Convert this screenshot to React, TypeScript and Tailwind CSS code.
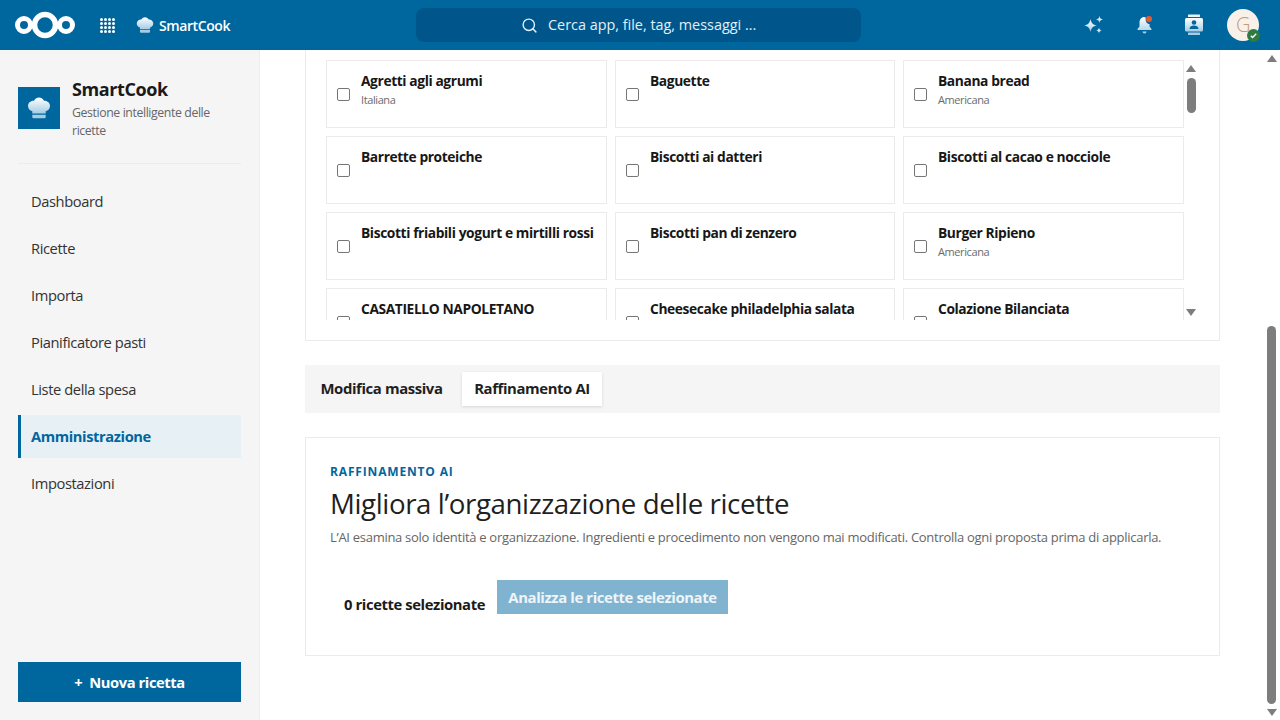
import { Search } from "lucide-react"

const recipes = [
  { name: "Agretti agli agrumi", kind: "Italiana" },
  { name: "Baguette" },
  { name: "Banana bread", kind: "Americana" },
  { name: "Barrette proteiche" },
  { name: "Biscotti ai datteri" },
  { name: "Biscotti al cacao e nocciole" },
  { name: "Biscotti friabili yogurt e mirtilli rossi" },
  { name: "Biscotti pan di zenzero" },
  { name: "Burger Ripieno", kind: "Americana" },
  { name: "CASATIELLO NAPOLETANO" },
  { name: "Cheesecake philadelphia salata" },
  { name: "Colazione Bilanciata" },
]

const navItems = [
  "Dashboard",
  "Ricette",
  "Importa",
  "Pianificatore pasti",
  "Liste della spesa",
  "Amministrazione",
  "Impostazioni",
]

function IconGradient({ id }: { id: string }) {
  return (
    <defs>
      <linearGradient id={id} x1="0" y1="0" x2="0" y2="1">
        <stop offset="0" stopColor="#ffffff" />
        <stop offset="1" stopColor="#a4cce4" />
      </linearGradient>
    </defs>
  )
}

function ChefHatIcon({ id, className }: { id: string; className?: string }) {
  return (
    <svg viewBox="0 0 24 24" className={className}>
      <IconGradient id={id} />
      <path
        fill={`url(#${id})`}
        d="M12 1.500c-2.300 0-4.200 1.300-5 3.200C3.600 4.500 1 6.900 1 10c0 2.600 1.800 4.700 4.300 5.300V17.500h13.400v-2.200C21.200 14.700 23 12.600 23 10c0-3.100-2.600-5.500-6-5.300-.8-1.900-2.700-3.200-5-3.200z"
      />
      <path fill="#a4cce4" d="M5.300 18.700h13.400V21a1.300 1.300 0 0 1-1.300 1.300H6.600A1.300 1.300 0 0 1 5.300 21z" />
    </svg>
  )
}

function Triangle({ down }: { down?: boolean }) {
  return (
    <div
      className={
        down
          ? "h-0 w-0 border-x-[5px] border-t-[7px] border-x-transparent border-t-[#7d7d7d]"
          : "h-0 w-0 border-x-[5px] border-b-[7px] border-x-transparent border-b-[#7d7d7d]"
      }
    />
  )
}

function RecipeCard({ name, kind }: { name: string; kind?: string }) {
  return (
    <div className="flex h-[68px] items-center gap-[11px] border border-[#ebebeb] bg-white px-[10px]">
      <div className="h-[13px] w-[13px] shrink-0 rounded-[2px] border border-[#767676] bg-white" />
      <div className="h-full min-w-0 flex-1 pt-[10px]">
        <div className="whitespace-nowrap text-[13.800px] font-bold leading-[19px] text-[#171717]">{name}</div>
        {kind && <div className="mt-[2px] text-[11px] leading-[16px] text-[#6b6b6b]">{kind}</div>}
      </div>
    </div>
  )
}

export default function App() {
  return (
    <div className="flex h-screen w-full flex-col overflow-hidden bg-white font-['Open_Sans','Noto_Sans',sans-serif] tracking-[-0.025em]">
      <header className="flex h-[50px] shrink-0 items-center bg-[#00679e] pl-[14px] pr-[21px] text-white">
        <svg viewBox="0 0 62 30" className="h-[30px] w-[62px]" fill="none" stroke="white">
          <circle cx="10" cy="15" r="6.500" strokeWidth="5" />
          <circle cx="31" cy="15" r="10.500" strokeWidth="5.500" />
          <circle cx="52" cy="15" r="6.500" strokeWidth="5" />
        </svg>
        <div className="ml-[24px] grid grid-cols-4 gap-[1px]">
          {Array.from({ length: 16 }).map((_, i) => (
            <div key={i} className="h-[3px] w-[3px] rounded-full bg-white" />
          ))}
        </div>
        <ChefHatIcon id="hat-top" className="ml-[21px] h-[18px] w-[18px]" />
        <span className="ml-[5px] text-[14px] font-semibold">SmartCook</span>
        <div className="ml-[186px] flex h-[34px] w-[445px] items-center justify-center gap-[10px] rounded-[8px] bg-[#00568a]">
          <Search size={17} strokeWidth={2} className="text-[#e3f0f7]" />
          <span className="text-[14.400px] tracking-normal text-[#e3f0f7]">Cerca app, file, tag, messaggi ...</span>
        </div>
        <div className="ml-auto flex items-center">
          <svg viewBox="0 0 20 20" className="h-[20px] w-[20px]">
            <IconGradient id="spark" />
            <g fill="url(#spark)">
              <path d="M6.500 4c.7 4 2.500 5.800 6.500 6.500-4 .7-5.800 2.500-6.500 6.500-.7-4-2.500-5.800-6.500-6.500 4-.7 5.800-2.500 6.500-6.500z" />
              <path d="M15.500 1c.4 2.200 1.300 3.100 3.500 3.500-2.200.4-3.100 1.300-3.500 3.500-.4-2.200-1.300-3.100-3.500-3.500 2.200-.4 3.100-1.300 3.500-3.500z" />
              <path d="M15 12.500c.3 1.900 1.100 2.700 3 3-1.900.3-2.700 1.100-3 3-.3-1.900-1.100-2.700-3-3 1.900-.3 2.700-1.100 3-3z" />
            </g>
          </svg>
          <div className="relative ml-[30px] h-[20px] w-[20px]">
            <svg viewBox="0 0 20 20" className="h-[20px] w-[20px]">
              <IconGradient id="bell" />
              <path
                fill="url(#bell)"
                d="M10.500 2C7.200 2 5.500 4.600 5.500 7.500v4l-2 2.500v1h14v-1l-2-2.500V9c-2.600 0-4.400-2.400-3.800-6.500-.5-.3-1-.5-1.700-.5zM8.500 16.500a2 2 0 0 0 4 0z"
              />
            </svg>
            <div className="absolute right-[2px] top-[1px] h-[6px] w-[6px] rounded-full bg-[#e9592f]" />
          </div>
          <svg viewBox="0 0 20 22" className="ml-[30px] h-[22px] w-[20px]">
            <IconGradient id="contacts" />
            <rect x="4" y="0.500" width="12" height="2.500" rx="0.500" fill="#e8f2f8" />
            <rect x="1" y="4" width="18" height="13.500" rx="1.500" fill="url(#contacts)" />
            <rect x="4" y="18.500" width="12" height="2.500" rx="0.500" fill="#a4cce4" />
            <circle cx="10" cy="8.500" r="2.300" fill="#00679e" />
            <path d="M5.500 15c0-2.300 2.200-3.400 4.500-3.400s4.500 1.100 4.500 3.400z" fill="#00679e" />
          </svg>
          <div className="relative ml-[23px] flex h-[32px] w-[32px] items-center justify-center rounded-full bg-[#f8f1ea] text-[20px] font-light text-[#c49a74]">
            G
            <div className="absolute -bottom-[1px] -right-[1px] flex h-[13px] w-[13px] items-center justify-center rounded-full bg-[#2d7b41]">
              <svg viewBox="0 0 10 10" className="h-[9px] w-[9px]" fill="none" stroke="white" strokeWidth="1.500">
                <path d="M2 5.200l2 2 4-4.200" />
              </svg>
            </div>
          </div>
        </div>
      </header>

      <div className="flex min-h-0 flex-1">
        <aside className="flex w-[260px] shrink-0 flex-col border-r border-[#ededed] bg-[#f5f5f5] px-[18px] pb-[18px] pt-[27px]">
          <div className="flex items-start gap-[12px] border-b border-[#ebebeb] pb-[23px]">
            <div className="mt-[10px] flex h-[42px] w-[42px] shrink-0 items-center justify-center bg-[#00679e]">
              <ChefHatIcon id="hat-side" className="h-[24px] w-[24px]" />
            </div>
            <div>
              <div className="text-[18px] font-bold leading-[24px] text-[#1a1a1a]">SmartCook</div>
              <div className="mt-[3px] text-[12.300px] leading-[18px] text-[#666666]">Gestione intelligente delle ricette</div>
            </div>
          </div>
          <nav className="mt-[16px] flex flex-col gap-[4px]">
            {navItems.map((item) =>
              item === "Amministrazione" ? (
                <div key={item} className="flex h-[43px] items-center border-l-[3px] border-[#00679e] bg-[#e6f0f5] pl-[10px] text-[14.700px] font-bold text-[#00679e]">
                  {item}
                </div>
              ) : (
                <div key={item} className="flex h-[43px] items-center pl-[13px] text-[14.700px] text-[#333333]">
                  {item}
                </div>
              )
            )}
          </nav>
          <button className="mt-auto flex h-[40px] items-center justify-center gap-[7px] bg-[#00679e] text-[14.700px] font-bold text-white">
            <span>+</span>
            <span>Nuova ricetta</span>
          </button>
        </aside>

        <main className="flex min-w-0 flex-1">
          <div className="w-[1003px] pl-[45px] pr-[43px]">
            <section className="flex h-[291px] border-x border-b border-[#ebebeb] pl-[20px]">
              <div className="h-[270px] w-[858px] overflow-hidden pt-[10px]">
                <div className="grid grid-cols-[281px_280px_281px] gap-x-[8px] gap-y-[8px]">
                  {recipes.map((r) => (
                    <RecipeCard key={r.name} name={r.name} kind={r.kind} />
                  ))}
                </div>
              </div>
              <div className="flex h-[270px] w-[14px] flex-col items-center pt-[15px]">
                <Triangle />
                <div className="mt-[6px] h-[35px] w-[9px] rounded-full bg-[#7d7d7d]" />
                <div className="flex-1" />
                <Triangle down />
                <div className="h-[4px]" />
              </div>
            </section>

            <div className="mt-[24px] flex h-[48px] items-center bg-[#f5f5f5] px-[6px]">
              <div className="flex h-[34px] w-[141px] items-center justify-center pb-[1px] text-[14.900px] font-bold text-[#1f1f1f]">Modifica massiva</div>
              <div className="ml-[10px] flex h-[34px] w-[140px] items-center justify-center bg-white pb-[1px] text-[14.900px] font-bold text-[#1f1f1f] shadow-[0_1px_3px_rgba(0,0,0,0.12)]">Raffinamento AI</div>
            </div>

            <section className="mt-[24px] h-[219px] border border-[#ebebeb] px-[24px] pt-[25px]">
              <div className="text-[12px] font-bold uppercase leading-[18px] tracking-[0.07em] text-[#00679e]">Raffinamento AI</div>
              <h1 className="mt-[4px] text-[27.700px] font-normal leading-[36px] text-[#1f1f1f]">Migliora l’organizzazione delle ricette</h1>
              <p className="mt-[7px] whitespace-nowrap text-[13px] leading-[18px] tracking-[-0.022em] text-[#666666]">
                L’AI esamina solo identità e organizzazione. Ingredienti e procedimento non vengono mai modificati. Controlla ogni proposta prima di applicarla.
              </p>
              <div className="mt-[34px] flex items-start">
                <div className="ml-[14px] mt-[13px] text-[14.800px] font-bold leading-[22px] text-[#1a1a1a]">0 ricette selezionate</div>
                <button className="ml-[12px] flex h-[34px] w-[231px] items-center justify-center bg-[#7fb3d0] text-[14.900px] font-bold text-[#eef5f9]">
                  Analizza le ricette selezionate
                </button>
              </div>
            </section>
          </div>

          <div className="flex w-[17px] flex-col items-center pb-[4px] pt-[5px]">
            <Triangle />
            <div className="mt-[264px] h-[378px] w-[9px] rounded-full bg-[#7d7d7d]" />
            <div className="flex-1" />
            <Triangle down />
          </div>
        </main>
      </div>
    </div>
  )
}
